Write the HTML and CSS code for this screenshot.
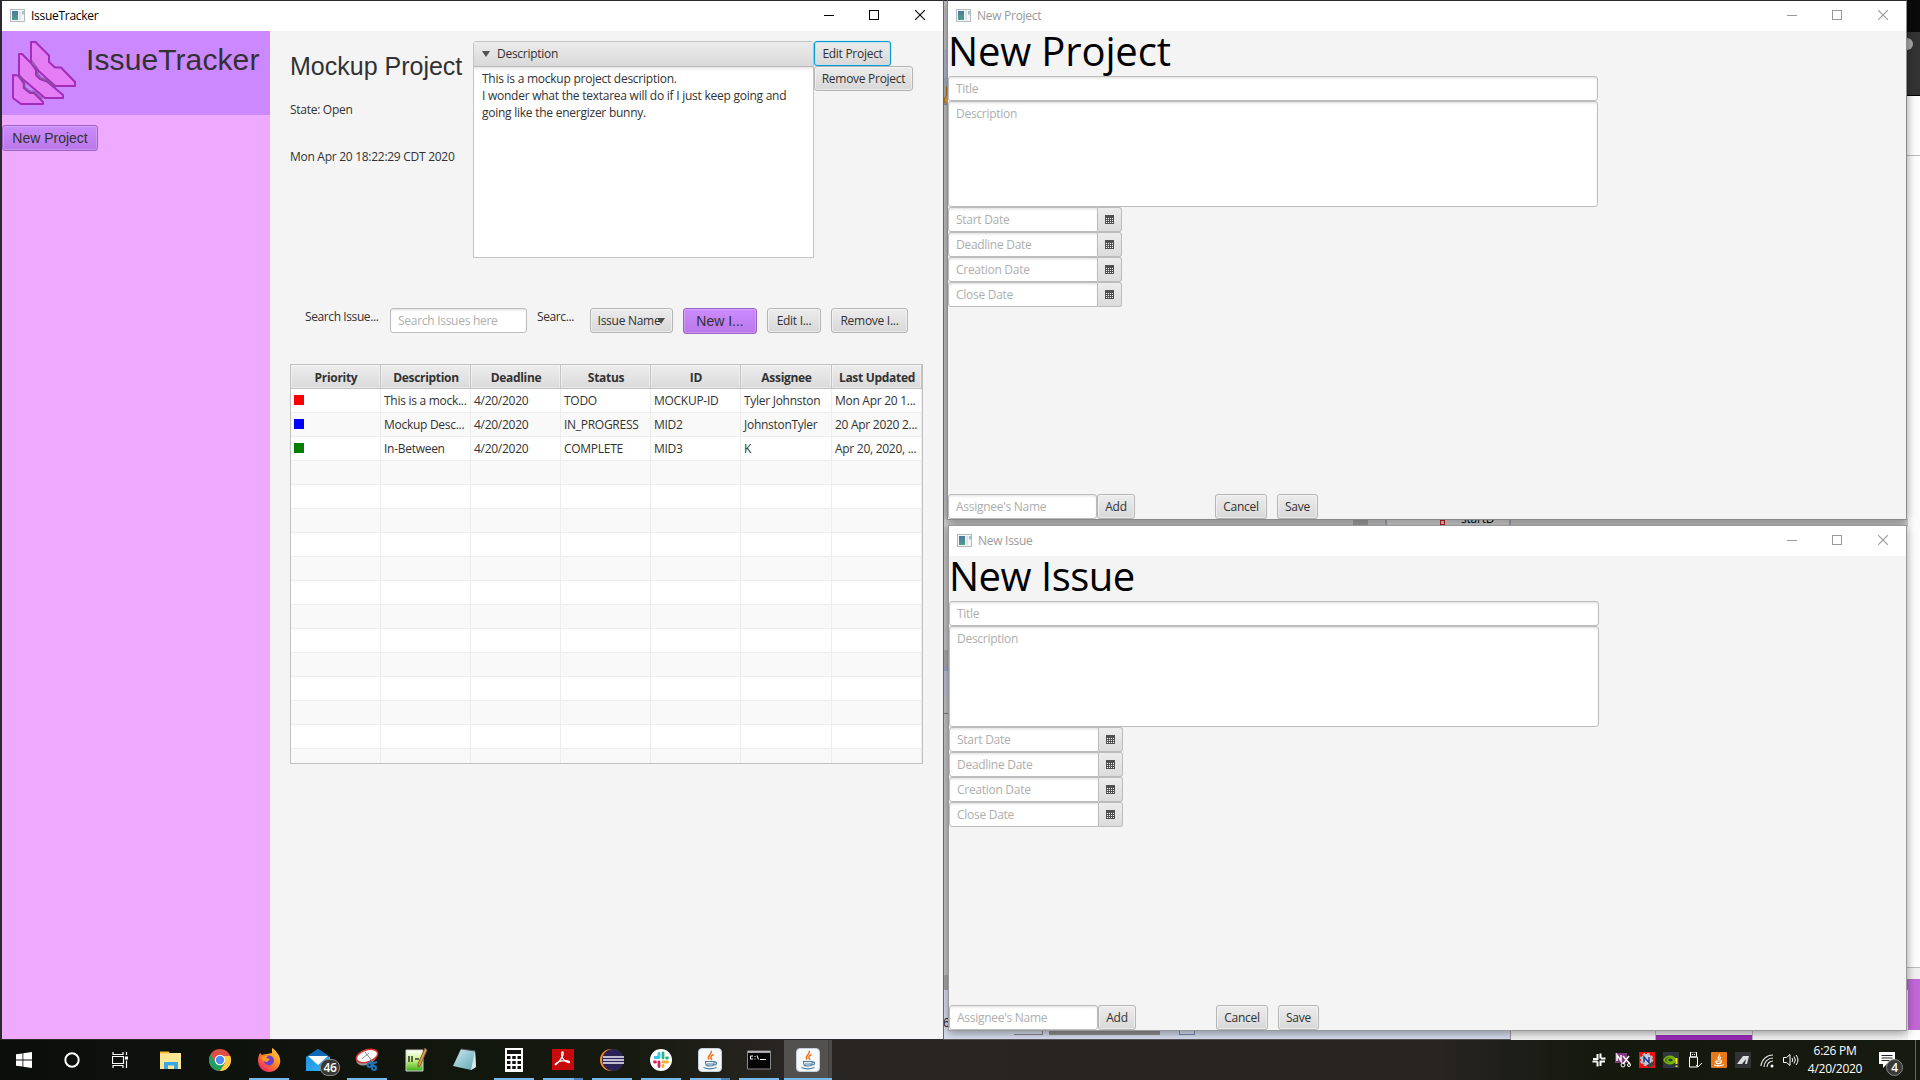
FILE: index.html
```html
<!DOCTYPE html>
<html lang="en">
<head>
<meta charset="utf-8">
<title>IssueTracker</title>
<link rel="stylesheet" href="styles.css">
</head>
<body>
<svg class="defs" width="0" height="0">
  <defs>
    <linearGradient id="app-g" x1="0" y1="0" x2="0" y2="1"><stop offset="0" stop-color="#4a78a0"/><stop offset="1" stop-color="#4fa08a"/></linearGradient>
    <linearGradient id="mail-g" x1="0" y1="0" x2="1" y2="1"><stop offset="0" stop-color="#1a8be0"/><stop offset="1" stop-color="#35b5f5"/></linearGradient>
    <linearGradient id="fox-g" x1="1" y1="0" x2="0.2" y2="1"><stop offset="0" stop-color="#ffe040"/><stop offset=".5" stop-color="#ff8a20"/><stop offset="1" stop-color="#f0206a"/></linearGradient>
    <linearGradient id="note-g" x1="0" y1="0" x2="0" y2="1"><stop offset="0" stop-color="#fff"/><stop offset=".5" stop-color="#c8f080"/><stop offset="1" stop-color="#3cb014"/></linearGradient>
    <linearGradient id="pad-g" x1="0" y1="0" x2="1" y2="1"><stop offset="0" stop-color="#cfeaf0"/><stop offset="1" stop-color="#5fa5b5"/></linearGradient>
    <symbol id="app" viewBox="0 0 15 13"><rect x=".5" y=".5" width="14" height="12" fill="#f4f6f8" stroke="#b4bac0"/><rect x="2" y="2" width="6" height="9" fill="url(#app-g)"/><rect x="9" y="2" width="2" height="9" fill="#dfe3e6"/><path d="M12 2h2v3l-2 1z" fill="#9cc8bc"/></symbol>
    <symbol id="min" viewBox="0 0 10 10"><path d="M0 5.500h10" stroke="currentColor"/></symbol>
    <symbol id="max" viewBox="0 0 10 10"><rect x=".5" y=".5" width="9" height="9" fill="none" stroke="currentColor"/></symbol>
    <symbol id="close" viewBox="0 0 10 10"><path d="M0 0l10 10M10 0L0 10" stroke="currentColor" stroke-width="1.100"/></symbol>
    <symbol id="cal" viewBox="0 0 9 9"><path d="M0 0h9v9H0z" fill="#505050"/><path d="M1 3.500h7M1 5.500h7M1 7.500h7" stroke="#fff" stroke-dasharray="1 1"/></symbol>
    <symbol id="java" viewBox="0 0 24 24"><rect x=".5" y=".5" width="23" height="23" rx="3.500" fill="#f6f8fa" stroke="#c4d0da"/><path d="M13 3c2 3-5 5-2 8.500M15.500 6.500c-3 1.500-3.500 3-1.500 5.500" fill="none" stroke="#ee7420" stroke-width="1.500"/><path d="M7 13.500h9.500M7.500 13.500c0 4 1 4.500 4.500 4.500s4-1 4.200-4.500M16.500 14c3-.5 2.500 3-.5 3M5.500 19.500c4 1.800 9 1.500 13 0M9 16h6" fill="none" stroke="#4878a0" stroke-width="1.200"/></symbol>
  </defs>
</svg>

<div class="backdrop">
  <div class="edge-strip"><i class="edge-black"></i><i class="edge-dark"><b></b></i><i class="edge-page"></i><i class="edge-rest"></i><i class="edge-foot"></i><i class="edge-purple"></i></div>
  <div class="mid-strip"><i class="m1"></i><i class="m2"></i><i class="m3"><svg viewBox="0 0 4 18"><path d="M4 .5H2.500V9L.5 12v5H4" fill="#e0a848" stroke="#b07818"/></svg></i><i class="m4"></i><i class="m5"></i><i class="m6"></i><i class="m7"></i><i class="m8"></i><i class="m9"></i></div>
  <div class="gap-strip"><i class="sq"></i><div class="pane"><b></b><span>startD</span></div></div>
  <div class="low-strip"><div class="ide"><span>6</span><b class="arrowbox"></b><b class="thumb"></b><b class="mark"></b></div><i class="tab"></i></div>
</div>

<main class="window main-window">
  <header class="titlebar"><svg class="app-icon"><use href="#app"/></svg><span>IssueTracker</span><div class="controls"><svg><use href="#min"/></svg><svg><use href="#max"/></svg><svg><use href="#close"/></svg></div></header>
  <div class="app-body">
    <aside class="sidebar">
      <div class="brand">
        <svg class="logo" viewBox="0 0 64 64" fill="#e57df5" stroke="#a42cbc" stroke-width="2" stroke-linejoin="round">
          <path d="M19 1h4.500L37 14.500V21l6 5.500h6L63 41v4H43L19 23z"/>
          <path d="M7 13h3l9 9 5 7v5l4 4 7 2.500L51 54v3H33L7 35z"/>
          <path d="M1 34l5 .5 6 8V47l6 5h4l9 9v2H9l-8-6z"/>
          <path d="M19 20l6 8v5l4 4.500 6 2 9 6.500M7 34l5 8v4.500l6 4.500h4l8 7" fill="none" stroke="#874a9c" stroke-width="3" opacity=".65"/>
        </svg>
        <h1>IssueTracker</h1>
      </div>
      <button class="btn purple sidebar-btn">New Project</button>
    </aside>
    <section class="content">
      <div class="summary">
        <div class="facts"><h2>Mockup Project</h2><p class="state">State: Open</p><p class="date">Mon Apr 20 18:22:29 CDT 2020</p></div>
        <div class="pane-box"><div class="pane-head"><i class="arrow"></i><span>Description</span></div><div class="pane-text">This is a mockup project description.<br>I wonder what the textarea will do if I just keep going and<br>going like the energizer bunny.</div></div>
        <div class="actions"><button class="btn focused">Edit Project</button><button class="btn remove">Remove Project</button></div>
      </div>
      <div class="toolbar">
        <label class="l1">Search Issue...</label><div class="field search">Search Issues here</div><label class="l2">Searc...</label>
        <div class="btn combo">Issue Name<i class="arrow"></i></div><button class="btn purple new-issue">New I...</button><button class="btn edit">Edit I...</button><button class="btn rem">Remove I...</button>
      </div>
      <div class="table">
        <div class="row head"><b>Priority</b><b>Description</b><b>Deadline</b><b>Status</b><b>ID</b><b>Assignee</b><b>Last Updated</b></div>
        <div class="row"><span><i class="chip red"></i></span><span>This is a mock...</span><span>4/20/2020</span><span>TODO</span><span>MOCKUP-ID</span><span>Tyler Johnston</span><span>Mon Apr 20 1...</span></div>
        <div class="row"><span><i class="chip blue"></i></span><span>Mockup Desc...</span><span>4/20/2020</span><span>IN_PROGRESS</span><span>MID2</span><span>JohnstonTyler</span><span>20 Apr 2020 2...</span></div>
        <div class="row"><span><i class="chip green"></i></span><span>In-Between</span><span>4/20/2020</span><span>COMPLETE</span><span>MID3</span><span>K</span><span>Apr 20, 2020, ...</span></div>
        <div class="row"><span></span><span></span><span></span><span></span><span></span><span></span><span></span></div>
        <div class="row"><span></span><span></span><span></span><span></span><span></span><span></span><span></span></div>
        <div class="row"><span></span><span></span><span></span><span></span><span></span><span></span><span></span></div>
        <div class="row"><span></span><span></span><span></span><span></span><span></span><span></span><span></span></div>
        <div class="row"><span></span><span></span><span></span><span></span><span></span><span></span><span></span></div>
        <div class="row"><span></span><span></span><span></span><span></span><span></span><span></span><span></span></div>
        <div class="row"><span></span><span></span><span></span><span></span><span></span><span></span><span></span></div>
        <div class="row"><span></span><span></span><span></span><span></span><span></span><span></span><span></span></div>
        <div class="row"><span></span><span></span><span></span><span></span><span></span><span></span><span></span></div>
        <div class="row"><span></span><span></span><span></span><span></span><span></span><span></span><span></span></div>
        <div class="row"><span></span><span></span><span></span><span></span><span></span><span></span><span></span></div>
        <div class="row"><span></span><span></span><span></span><span></span><span></span><span></span><span></span></div>
        <div class="row"><span></span><span></span><span></span><span></span><span></span><span></span><span></span></div>
      </div>
    </section>
  </div>
</main>

<section class="window dialog project">
  <header class="titlebar"><svg class="app-icon"><use href="#app"/></svg><span>New Project</span><div class="controls"><svg><use href="#min"/></svg><svg><use href="#max"/></svg><svg><use href="#close"/></svg></div></header>
  <h3>New Project</h3>
  <div class="field wide">Title</div>
  <div class="field area">Description</div>
  <div class="picker"><div class="field">Start Date</div><i><svg><use href="#cal"/></svg></i></div>
  <div class="picker"><div class="field">Deadline Date</div><i><svg><use href="#cal"/></svg></i></div>
  <div class="picker"><div class="field">Creation Date</div><i><svg><use href="#cal"/></svg></i></div>
  <div class="picker"><div class="field">Close Date</div><i><svg><use href="#cal"/></svg></i></div>
  <footer><div class="field">Assignee's Name</div><button class="btn add">Add</button><button class="btn cancel">Cancel</button><button class="btn save">Save</button></footer>
</section>

<section class="window dialog issue">
  <header class="titlebar"><svg class="app-icon"><use href="#app"/></svg><span>New Issue</span><div class="controls"><svg><use href="#min"/></svg><svg><use href="#max"/></svg><svg><use href="#close"/></svg></div></header>
  <h3>New Issue</h3>
  <div class="field wide">Title</div>
  <div class="field area">Description</div>
  <div class="picker"><div class="field">Start Date</div><i><svg><use href="#cal"/></svg></i></div>
  <div class="picker"><div class="field">Deadline Date</div><i><svg><use href="#cal"/></svg></i></div>
  <div class="picker"><div class="field">Creation Date</div><i><svg><use href="#cal"/></svg></i></div>
  <div class="picker"><div class="field">Close Date</div><i><svg><use href="#cal"/></svg></i></div>
  <footer><div class="field">Assignee's Name</div><button class="btn add">Add</button><button class="btn cancel">Cancel</button><button class="btn save">Save</button></footer>
</section>

<nav class="taskbar">
  <div class="sys">
    <svg viewBox="0 0 16 16" class="s16"><path d="M0 2.300L6.500 1.400v6.200H0zM7.300 1.300L16 0v7.600H7.300zM0 8.400h6.500v6.200L0 13.700zM7.300 8.400H16V16l-8.700-1.300z" fill="#fff"/></svg>
    <svg viewBox="0 0 16 16" class="s16"><circle cx="8" cy="8" r="6.700" fill="none" stroke="#fff" stroke-width="2"/></svg>
    <svg viewBox="0 0 16 16" class="s16"><path d="M1 0v2.500h10V0M.5 4.500h11v7H.5zM1 16v-2.500h10V16M14.500 0v3M14.500 8.500V16" fill="none" stroke="#fff" stroke-width="1.200"/><path d="M13 4.500h3v3h-3z" fill="#fff"/></svg>
  </div>
  <div class="apps">
    <div class="task"><svg viewBox="0 0 24 24"><path d="M1 4h8l2 1h11v16H1z" fill="#ffe694"/><path d="M1 3.500h9v2H1z" fill="#f5c030"/><path d="M5 21v-7h14v7h-4v-3.500H9V21z" fill="#38a8e4"/></svg></div>
    <div class="task"><svg viewBox="0 0 24 24"><circle cx="12" cy="12" r="11" fill="#dd4f43"/><path d="M2.500 6.500L10 18l-1.500 4.500A11 11 0 0 1 2.500 6.500z" fill="#1fa060"/><path d="M22.300 8H13l4 7-5.500 8A11 11 0 0 0 22.300 8z" fill="#ffcd42"/><path d="M7 14l2 8.500 3 .5 4-7z" fill="#1fa060"/><circle cx="12" cy="12" r="5.300" fill="#fff"/><circle cx="12" cy="12" r="4.200" fill="#4c8bf5"/></svg></div>
    <div class="task open"><svg viewBox="0 0 24 24"><path d="M3 5l2 2c2-1 3-1 5-1l5-1V0c4 2 5 5 5 5l1 1c6 9-1 18-9 18C3 24-2 14 3 5z" fill="url(#fox-g)"/><circle cx="12" cy="12.500" r="5" fill="#6a3fd0"/><path d="M4 9l8-2-3 3 4 1-3 3-4-1z" fill="#ff9820"/></svg></div>
    <div class="task"><svg viewBox="0 0 24 24"><path d="M0 9L12 1l12 8v14H0z" fill="url(#mail-g)"/><path d="M0 9L12 1l12 8z" fill="#1068b8"/><path d="M2 8h20l-10 9z" fill="#fff"/></svg><em class="badge">46</em></div>
    <div class="task open"><svg viewBox="0 0 24 24"><ellipse cx="11" cy="11" rx="10" ry="6" transform="rotate(-18 11 11)" fill="#999"/><ellipse cx="12" cy="8" rx="11" ry="6" transform="rotate(-18 12 8)" fill="#fff" stroke="#d33" stroke-width="1.500"/><path d="M10 4l8 10M14 5l-7 6" stroke="#888"/><g fill="none" stroke="#2075b5" stroke-width="2"><circle cx="14.500" cy="17" r="2"/><circle cx="19" cy="20" r="2"/><path d="M15 13l4 5M22 14l-6 2"/></g></svg></div>
    <div class="task"><svg viewBox="0 0 24 24"><path d="M2 2h17v21H2z" fill="url(#note-g)" stroke="#ccc"/><path d="M5 8v6M8 8v6M11 11h4" stroke="#333" stroke-width="1.500"/><path d="M21 0l2 2-7 16-2 1v-3z" fill="#e8a33a" stroke="#7a5a38"/></svg></div>
    <div class="task"><svg viewBox="0 0 24 24"><path d="M8 1l14 2 1 16-5 3L0 18z" fill="url(#pad-g)"/><path d="M22 3l1 16-5 3z" fill="#dce6e8"/><path d="M8 1l14 2" stroke="#556"/></svg></div>
    <div class="task open"><svg viewBox="0 0 24 24"><path d="M3 0h18v24H3z" fill="#fff"/><path d="M5 2h14v4H5z" fill="#111"/><path d="M5 9.500h14M5 14.500h14M5 19.500h14" stroke="#111" stroke-width="3" stroke-dasharray="3.500 1.750"/></svg></div>
    <div class="task open double"><svg viewBox="0 0 24 24"><path d="M1 1h22v21H1z" fill="#c80a0a"/><path d="M11.500 4c2 0 0 7-6 12-2 2-2-1 3-2.500 4-1.500 10-1 10 .5s-5-.5-7-4c-1-2-1.500-6 0-6z" fill="none" stroke="#fff" stroke-width="1.300"/></svg></div>
    <div class="task open"><svg viewBox="0 0 24 24"><circle cx="11" cy="12" r="11" fill="#f6941e"/><circle cx="13" cy="12" r="11" fill="#2c2255"/><path d="M3 9h21M3 12h21M3 15h21" stroke="#f0edfa" stroke-width="1.600"/></svg></div>
    <div class="task open"><svg viewBox="0 0 24 24"><circle cx="12" cy="12" r="11" fill="#fff"/><g fill="none" stroke-width="2.800" stroke-linecap="round"><path d="M10 5.500v3M6 9.500h4" stroke="#36c5f0"/><path d="M14 5v5M18.500 10h-1" stroke="#2eb67d"/><path d="M14 14h4.500M14 17.500v1" stroke="#ecb22e"/><path d="M10 14v4.500M5.500 14h1" stroke="#e01e5a"/></g></svg></div>
    <div class="task open double"><svg><use href="#java"/></svg></div>
    <div class="task open"><svg viewBox="0 0 24 24"><path d="M.5 3h23v18H.5z" fill="#050505" stroke="#888"/><path d="M1 4h22" stroke="#ddd" stroke-width="1.500"/><path d="M6 8H3.500v3H6M8 8v1M8 10.500v1M10 7.500l1.500 4M13 11.500h6" stroke="#fff" fill="none"/></svg></div>
    <div class="task open active double"><svg><use href="#java"/></svg></div>
  </div>
  <div class="tray">
    <svg viewBox="0 0 16 16"><path d="M6.500 2v5H2M9.500 1.500v5M10 6.500h4.500M14 9.500H9.500V14M6.500 9.500v5M6.500 9.500H1.500" fill="none" stroke="#fff" stroke-width="2"/></svg>
    <svg viewBox="0 0 16 16"><path d="M0 1h12v10H0z" fill="#80397b"/><path d="M2 9V3l4 6V3M8 4l7 8M14 4l-6 8" stroke="#fff" stroke-width="1.500" fill="none"/><circle cx="8" cy="13" r="2" fill="none" stroke="#fff"/><circle cx="14" cy="13" r="1.500" fill="none" stroke="#fff"/></svg>
    <svg viewBox="0 0 16 16"><path d="M0 0h16v16H0z" fill="#f01010"/><circle cx="7.500" cy="7.500" r="5.500" fill="#c8d0dc" stroke="#b4bcc8" stroke-width="2.500" stroke-dasharray="2.500 1.800"/><path d="M5 10.500V5l5 5.500V5" fill="none" stroke="#1a3a90" stroke-width="1.500"/><path d="M8 13l7-4v4l-5 3z" fill="#444"/></svg>
    <svg viewBox="0 0 16 16"><path d="M0 0h16v16H0z" fill="#30363e"/><path d="M1 8c3-5 9-5 12 0-3 5-9 5-12 0zM4 8c2-3 5-3 7 0-2 3-5 3-7 0z" fill="none" stroke="#76b900" stroke-width="1.500"/><path d="M13.500 6v6M13.500 13.500V15" stroke="#ffe000" stroke-width="2"/></svg>
    <svg viewBox="0 0 16 16"><path d="M3.500 0h6v5h-6zM2.500 5h8v10h-8zM5.500 2v1M7.500 2v1M9 13l2 2 4-4" fill="none" stroke="#fff"/></svg>
    <svg viewBox="0 0 16 16"><rect width="16" height="16" rx="1" fill="#e87818"/><path d="M8.500 2c1 2-3 3-1 6M10 5c-2 1-1 2-1 3M4.500 9h6c0 3-5 4-6 0M3 13c4 1.500 7 1 10-.5" fill="none" stroke="#fff" stroke-width="1.200"/></svg>
    <svg viewBox="0 0 16 16"><path d="M0 0h16v16H0z" fill="#303236"/><path d="M2 12l6-8h6l-2 8h-2l1-5-4 5z" fill="#ddd"/></svg>
    <svg viewBox="0 0 16 16"><path d="M2 14A12 12 0 0 1 14 3M5 15a9 9 0 0 1 9-9M8 15a6 6 0 0 1 6-6" fill="none" stroke="#ddd" stroke-width="1.200"/><circle cx="13" cy="14" r="1.500" fill="#fff"/></svg>
    <svg viewBox="0 0 16 16"><path d="M.5 5.500h3l3.500-3v11l-3.500-3h-3zM9 6q1.500 2 0 4M11 4.500q2.800 3.500 0 7M13 3q4 5 0 10" fill="none" stroke="#fff"/></svg>
    <div class="clock"><span>6:26 PM</span><span>4/20/2020</span></div>
    <div class="note"><svg viewBox="0 0 16 16"><path d="M0 0h16v12H8l-4 4v-4H0z" fill="#fff"/><path d="M2.500 3.500h11M2.500 6h11M2.500 8.500h8" stroke="#222"/></svg><em class="badge">4</em></div>
  </div>
</nav>
</body>
</html>
```
FILE: styles.css
```css
* { box-sizing: border-box; margin: 0; padding: 0; }
html, body { width: 1920px; height: 1080px; overflow: hidden; }
body { position: relative; background: #262326; font: 12px/16px "Open Sans", "Noto Sans", sans-serif; letter-spacing: -.28px; color: #323232; }
i, em { font-style: normal; }
button { font: inherit; color: inherit; letter-spacing: inherit; }
svg { display: block; flex: none; }
.defs { position: absolute; }

/* windows on the desktop */
.window { position: absolute; display: flex; flex-direction: column; background: #f4f4f4; overflow: hidden; }
.main-window { left: 0; top: 0; width: 944px; height: 1040px; border: solid #2b2830; border-width: 1px 1px 1px 2px; border-right-color: #666; z-index: 2; }
.project { left: 947px; top: 0; width: 960px; height: 520px; border: solid #8c8c8c; border-width: 1px; border-top-color: #2b2830; box-shadow: 0 2px 9px rgba(0,0,0,.4); z-index: 1; }
.issue { left: 948px; top: 525px; width: 959px; height: 506px; border: 1px solid #999; box-shadow: 0 2px 9px rgba(0,0,0,.4); z-index: 1; }
.titlebar { display: flex; align-items: center; height: 30px; flex: none; background: #fff; padding: 0 18px 2px 8px; color: #000; }
.dialog .titlebar { color: #999; }
.app-icon { width: 15px; height: 13px; margin-right: 6px; }
.titlebar span { padding-top: 1px; }
.controls { margin-left: auto; display: flex; gap: 35px; }
.controls svg { width: 10px; height: 10px; }
.controls svg:last-child { margin-left: 1px; }

/* main window */
.app-body { display: flex; flex: 1; min-height: 0; }
.sidebar { width: 268px; background: #eeaaff; }
.brand { display: flex; height: 84px; background: #cc88ff; padding: 10px; }
.logo { width: 64px; height: 64px; }
h1 { font: 30px/34px "Liberation Sans", Arial, sans-serif; letter-spacing: .1px; margin: 2px 0 0 10px; }
.btn { display: flex; align-items: center; justify-content: center; height: 25px; flex: none; border: 1px solid #b5b5b5; border-radius: 3px; background: linear-gradient(#ececec, #d8d8d8); box-shadow: inset 0 0 0 1px rgba(255,255,255,.45); white-space: nowrap; }
.btn.purple { border-color: #9c63c8; background: linear-gradient(#cc8cff, #b977e8); font: 14px/16px "Liberation Sans", Arial, sans-serif; letter-spacing: 0; box-shadow: inset 0 0 0 1px rgba(255,255,255,.2); }
.sidebar-btn { width: 96px; height: 26px; margin-top: 10px; }
.content { flex: 1; padding: 10px 18px 0 20px; }
.summary { display: flex; height: 217px; }
.facts { width: 183px; flex: none; }
h2 { font: 25px/30px "Liberation Sans", Arial, sans-serif; letter-spacing: 0; margin-top: 10px; white-space: nowrap; }
.state { margin-top: 21px; }
.date { margin-top: 31px; white-space: nowrap; }
.pane-box { width: 341px; flex: none; border: 1px solid #c4c4c4; border-radius: 3px 3px 0 0; background: #fff; }
.pane-head { display: flex; align-items: center; height: 25px; padding-left: 8px; gap: 7px; background: linear-gradient(#ececec, #d9d9d9); border-bottom: 1px solid #b8b8b8; }
.arrow { border: 4px solid transparent; border-top: 6px solid #505050; border-bottom: 0; }
.pane-text { padding: 3px 8px; line-height: 17px; letter-spacing: -.25px; white-space: nowrap; box-shadow: inset 0 4px 4px -3px #ddd; }
.actions .focused { width: 77px; border-color: #039ed3; box-shadow: 0 0 1px #039ed3, inset 0 0 0 1px #c5e2ec; }
.actions .remove { width: 99px; }
.toolbar { display: flex; height: 26px; margin: 50px 0 30px 15px; white-space: nowrap; }
.toolbar label { padding-top: 1px; letter-spacing: -.4px; }
.field { display: flex; align-items: center; height: 25px; flex: none; padding: 1px 7px 0; background: #fff; border: 1px solid #bcbcbc; border-radius: 3px; box-shadow: inset 0 2px 3px -1px #ddd; color: #aeaeae; white-space: nowrap; }
.l1 { width: 85px; }
.search { width: 137px; }
.toolbar .l2 { width: 63px; padding-left: 10px; }
.combo { width: 83px; }
.combo .arrow { margin-left: -3px; }
.new-issue { width: 74px; height: 26px; margin-left: 10px; }
.edit { width: 54px; margin-left: 10px; }
.rem { width: 77px; margin-left: 10px; }
.table { width: 633px; height: 400px; border: 1px solid #c0c0c0; overflow: hidden; }
.row { display: grid; grid-template-columns: repeat(5, 90px) 91px 90px; height: 24px; background: #fff; border-bottom: 1px solid #ededed; }
.row:nth-child(odd) { background: #f9f9f9; }
.row > * { display: flex; align-items: center; padding-left: 3px; border-right: 1px solid #ededed; white-space: nowrap; }
.row.head { background: linear-gradient(#ededed, #dadada); border-bottom-color: #c0c0c0; }
.row.head b { justify-content: center; padding: 2px 0 0 1px; border-right-color: #c4c4c4; letter-spacing: -.3px; box-shadow: inset 0 0 0 1px rgba(255,255,255,.4); }
.chip { width: 10px; height: 10px; margin-bottom: 1px; }
.red { background: red; } .blue { background: blue; } .green { background: green; }

/* dialogs */
h3 { height: 45px; flex: none; font: 40px/39px "Open Sans", "Noto Sans", sans-serif; letter-spacing: -.15px; color: #000; white-space: nowrap; }
.issue h3 { letter-spacing: -.5px; }
.wide { width: 650px; }
.area { width: 650px; height: 106px; align-items: flex-start; padding-top: 4px; }
.issue .area { height: 101px; }
.picker { display: flex; flex: none; }
.picker .field { width: 150px; border-radius: 3px 0 0 3px; }
.picker i { width: 24px; height: 25px; display: flex; align-items: center; justify-content: center; border: 1px solid #bcbcbc; border-left: 0; border-radius: 0 3px 3px 0; background: linear-gradient(#ececec, #dcdcdc); }
.picker svg { width: 9px; height: 9px; }
footer { display: flex; margin-top: auto; }
footer .field { width: 149px; }
footer .btn { padding-top: 1px; }
.add { width: 38px; }
.cancel { width: 52px; margin-left: 80px; }
.save { width: 41px; margin-left: 10px; }

/* slivers of the windows behind */
.backdrop i, .backdrop b { display: block; }
.edge-strip { position: absolute; left: 1906px; top: 0; width: 14px; height: 1040px; background: #fdfdfd; display: flex; flex-direction: column; }
.edge-black { height: 32px; background: #0a0a0a; }
.edge-dark { height: 64px; background: #333; border-bottom: 1px solid #000; padding-top: 6px; }
.edge-dark b { width: 7px; height: 12px; background: #aaa; border-radius: 0 6px 6px 0; }
.edge-page { height: 60px; border-bottom: 1px solid #bbb; }
.edge-rest { height: 812px; border-bottom: 1px solid #bbb; }
.edge-foot { height: 11px; background: #f0f0f0; }
.edge-purple { height: 51px; background: #c268d6; }
.mid-strip { position: absolute; left: 944px; top: 1px; width: 4px; height: 1038px; display: flex; flex-direction: column; background: #c4c4c4; }
.m1 { height: 48px; }
.m2 { height: 30px; background: #b4bbcc; border-bottom: 1px solid #a0a8b8; }
.m3 { height: 25px; background: #a8b2c2; padding-top: 7px; }
.m3 svg { width: 4px; height: 18px; }
.m4 { height: 546px; border-top: 1px solid #8890a4; }
.m5 { height: 17px; background: #aaa; }
.m6 { height: 30px; background: #bcc2d2; border-top: 4px solid #9fa8ce; }
.m7 { height: 17px; border-bottom: 1px solid #777; }
.m8 { height: 279px; border-bottom: 18px solid #a8a8a8; }
.m9 { flex: 1; background: #c2cae4; }
.gap-strip { position: absolute; left: 944px; top: 519px; width: 964px; height: 8px; background: #d2d2d2; display: flex; }
.sq { width: 15px; margin-left: 409px; background: #aaa; }
.pane { display: flex; width: 126px; margin-left: 17px; background: #e0e0e0; border: solid #aab; border-width: 0 2px; }
.pane b { width: 5px; height: 5px; margin: 1px 0 0 53px; border: 1px solid #c22; }
.pane span { margin: -8px 0 0 16px; line-height: 16px; height: 16px; color: #000; letter-spacing: -.2px; }
.low-strip { position: absolute; left: 943px; top: 990px; width: 965px; height: 50px; background: #f4f4f4; display: flex; }
.ide { width: 568px; background: #d8def0; display: flex; align-items: flex-end; color: #222; border-right: 1px solid #999; border-bottom: 1px solid #555; }
.ide span { position: relative; width: 7px; padding-bottom: 8px; }
.ide .arrowbox { width: 29px; height: 5px; margin: 0 0 4px 64px; border: solid #888; border-width: 0 1px 1px 0; }
.ide .thumb { width: 111px; height: 6px; margin: 0 0 4px 6px; background: #909090; }
.ide .mark { width: 16px; height: 6px; margin: 0 0 4px 19px; border: 1px solid #6f8fb5; border-top: 0; }
.tab { width: 98px; margin-left: 144px; border: solid #bbb; border-width: 0 1px; background: linear-gradient(#f2f2f2 45px, #9a2cb8 45px); }

/* taskbar */
.taskbar { position: absolute; left: 0; top: 1040px; width: 1920px; height: 40px; z-index: 5; display: flex; background: linear-gradient(90deg, #0b0e0b 0, #12170e 480px, #171a10 640px, #292522 780px, #272422 1440px, #14180d 1600px, #171a10 100%); color: #fff; }
.sys { display: flex; width: 146px; }
.sys svg { margin: 12px 16px; }
.s16 { width: 16px; height: 16px; }
.apps { display: flex; }
.task { position: relative; width: 49px; display: flex; justify-content: center; align-items: center; }
.task svg { width: 24px; height: 24px; }
.task.open::after { content: ""; position: absolute; left: 5px; bottom: 0; width: 40px; height: 2px; background: #76b9ed; }
.task.double::after { background: linear-gradient(90deg, #76b9ed 31px, #4b82b3 31px); }
.task.active { background: linear-gradient(90deg, transparent 1px, #53514f 1px, #53514f 45px, #393735 45px, #4c4a48 46px); }
.task.active::after { left: 1px; width: 48px; background: #76b9ed; }
.badge { position: absolute; display: flex; align-items: center; justify-content: center; background: #383a38; border: 1px solid #888; font-weight: 600; }
.task .badge { left: 27px; top: 19px; width: 20px; height: 17px; border-radius: 8px; font-size: 12px; }
.tray { display: flex; align-items: center; gap: 8px; margin-left: auto; padding-right: 4px; }
.tray svg { width: 16px; height: 16px; }
.clock { width: 54px; margin: 0 2px 0 1px; display: flex; flex-direction: column; align-items: center; line-height: 18px; white-space: nowrap; }
.note { position: relative; width: 37px; height: 40px; margin-left: 7px; border-right: 1px solid #666; display: flex; align-items: center; }
.note .badge { left: 7px; top: 19px; width: 17px; height: 17px; border-radius: 50%; }
```
